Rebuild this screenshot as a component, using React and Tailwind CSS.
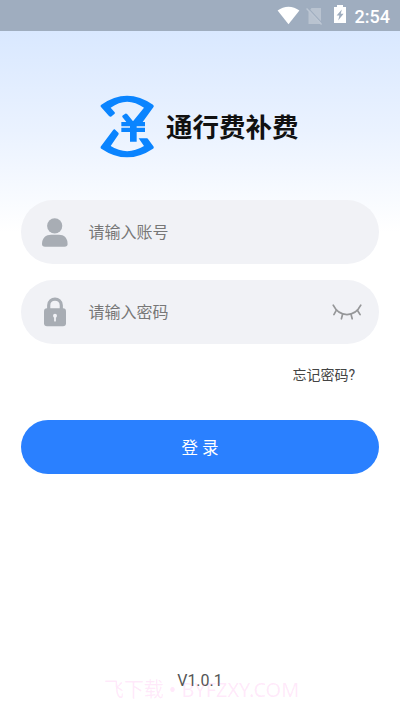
import { useState } from "react";

const StatusBar = () => {
  return (
    <div className="flex h-[31px] shrink-0 items-start justify-end bg-[#9fadbf] pr-[10px] font-['Roboto','Liberation_Sans',sans-serif] text-white">
      <svg className="mt-[6px] h-[19px] w-[23px]" viewBox="0 0 23 19" fill="currentColor">
        <path d="M0.6 4.6C7 -0.6 16 -0.6 22.4 4.6L11.5 18.2Z" />
      </svg>
      <svg className="mt-[7px] ml-[6px] h-[18px] w-[17px]" viewBox="0 0 17 18">
        <path d="M5.5 1H15V17H2.5V5Z" fill="#b9c3d0" />
        <path d="M1.6 0.6L16.6 16.6" stroke="#9fadbf" strokeWidth="1.2" />
        <path d="M0.6 1.6L15.6 17.4" stroke="#bcc6d3" strokeWidth="1.4" />
      </svg>
      <svg className="mt-[5px] ml-[11px] h-[18px] w-[12px]" viewBox="0 0 12 18">
        <path d="M3 0H9V2H12V18H0V2H3Z" fill="currentColor" />
        <path d="M7.8 4.6L2.6 10.6H5.4L4.2 15.4L9.6 8.8H6.8Z" fill="#9fadbf" />
      </svg>
      <span className="mt-[5px] ml-[9px] text-[18px] leading-[24px] font-medium">2:54</span>
    </div>
  );
};

const Logo = () => {
  return (
    <svg className="h-[63px] w-[54px]" viewBox="31 28 162 189" fill="#0a84ff">
      <path d="M35 57Q112 3 190 57Q194 61 191 65L159 109H166V122H141V126H166V139H141V168H121V139H95V126H121V122H95V109H110L98 94Q97 91 100 89L107 84Q110 83 113 86L130 107L163 66Q112 30 63 66L75 80Q77 83 74 85L64 93Q61 94 58 91L34 64Q31 60 35 57Z" />
      <path d="M75 131L86 141Q88 144 86 147L63 181Q112 212 163 181L147 158H172Q174 158 175 160L191 182Q194 186 190 189Q112 241 35 189Q31 186 34 182L71 132Q73 130 75 131Z" />
    </svg>
  );
};

const UserIcon = () => (
  <svg className="h-[29px] w-[26px] shrink-0" viewBox="0 0 26 29" fill="#a8adb4">
    <circle cx="12.7" cy="7.8" r="7.6" />
    <path d="M0 26C0 20 4 16.8 9 16.8H17C22 16.8 25.6 20 25.6 26Q25.6 28.8 22.5 28.8H3Q0 28.8 0 26Z" />
  </svg>
);

const LockIcon = () => (
  <svg className="h-[30px] w-[22px] shrink-0" viewBox="0 0 22 30">
    <path d="M4.7 12V8.2C4.7 0 17.3 0 17.3 8.2V12" fill="none" stroke="#a8adb4" strokeWidth="3.2" />
    <rect x="0" y="11.3" width="22" height="18" rx="3" fill="#a8adb4" />
    <circle cx="11" cy="18.8" r="2" fill="#f1f2f6" />
    <path d="M11 19V23.7" stroke="#f1f2f6" strokeWidth="1.8" strokeLinecap="round" />
  </svg>
);

const EyeClosedIcon = () => (
  <svg className="h-[17px] w-[30px]" viewBox="0 0 30 17" fill="none" stroke="#969799" strokeWidth="1.7" strokeLinecap="round">
    <path d="M1.2 1.2C7.5 13.7 22.5 13.7 28.8 1.2" />
    <path d="M4.4 6.2L1.9 10.6M10.6 10.2L9.4 14.8M19 10.2L20.2 14.8M25.4 6.2L28.1 10.6" />
  </svg>
);

export default function App() {
  const [account, setAccount] = useState("");
  const [password, setPassword] = useState("");
  const [showPassword, setShowPassword] = useState(false);

  return (
    <div className="flex h-[711px] w-full flex-col overflow-hidden bg-white bg-[linear-gradient(180deg,#d6e6ff_0px,#d9e8ff_31px,#eaf2ff_130px,#ffffff_232px)] font-['Roboto','Noto_Sans_CJK_SC',sans-serif]">
      <StatusBar />

      <div className="flex h-[169px] items-start pt-[64px] pl-[100px]">
        <Logo />
        <h1 className="mt-[14px] ml-[12px] text-[26.5px] leading-[38px] font-bold whitespace-nowrap text-[#111]">
          通行费补费
        </h1>
      </div>

      <form className="flex flex-col px-[21.4px]" onSubmit={(e) => e.preventDefault()}>
        <div className="flex h-[64px] items-center rounded-full bg-[#f1f2f6] pl-[20.5px]">
          <UserIcon />
          <input
            type="text"
            value={account}
            onChange={(e) => setAccount(e.target.value)}
            placeholder="请输入账号"
            className="ml-[20.5px] min-w-0 flex-1 pt-[2px] text-[16px] leading-[24px] text-[#333] outline-none placeholder:text-[#777]"
          />
        </div>

        <div className="mt-4 flex h-[64px] items-center rounded-full bg-[#f1f2f6] pr-[17px] pl-[22.5px]">
          <LockIcon />
          <input
            type={showPassword ? "text" : "password"}
            value={password}
            onChange={(e) => setPassword(e.target.value)}
            placeholder="请输入密码"
            className="ml-[22.5px] min-w-0 flex-1 pt-[2px] text-[16px] leading-[24px] text-[#333] outline-none placeholder:text-[#777]"
          />
          <button type="button" onClick={() => setShowPassword(!showPassword)}>
            <EyeClosedIcon />
          </button>
        </div>

        <a className="mt-[21px] mr-[23.5px] self-end text-[14px] leading-[20px] text-[#444]">忘记密码?</a>

        <button
          type="submit"
          className="mt-[35px] h-[53.5px] rounded-full bg-[#2a80ff] pt-[5px] text-[16.5px] text-white"
        >
          登 录
        </button>
      </form>

      <div className="relative mt-auto mb-[18px] text-center text-[16px] leading-[24px] text-[#555]">
        V1.0.1
        {/* watermark */}
        <span className="absolute top-[8px] left-[104px] font-['Noto_Sans','Noto_Sans_CJK_SC',sans-serif] text-[19.9px] leading-[26px] whitespace-nowrap text-[#ff50dc]/13">
          飞下载 • BYFZXY.COM
        </span>
      </div>
    </div>
  );
}
